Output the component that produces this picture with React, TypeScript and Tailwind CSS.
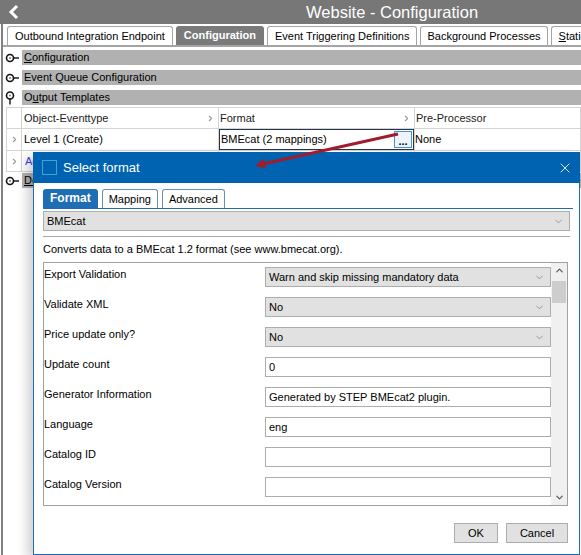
import { ChevronDown, ChevronRight, ChevronUp, X } from 'lucide-react';

const font = { fontFamily: '"Liberation Sans", Arial, sans-serif' };

function CollapsedIcon() {
  return (
    <svg width="15" height="12" viewBox="0 0 15 12" className="shrink-0">
      <circle cx="5" cy="6" r="3.5" fill="#fff" stroke="#111" strokeWidth="1.6" />
      <circle cx="5" cy="6" r="1" fill="#777" />
      <line x1="8.5" y1="6" x2="14" y2="6" stroke="#111" strokeWidth="1.4" />
    </svg>
  );
}

function ExpandedIcon() {
  return (
    <svg width="15" height="14" viewBox="0 0 15 14" className="shrink-0">
      <circle cx="5" cy="4.5" r="3.5" fill="#fff" stroke="#111" strokeWidth="1.6" />
      <circle cx="5" cy="4.5" r="1" fill="#777" />
      <line x1="5" y1="8" x2="5" y2="13.5" stroke="#111" strokeWidth="1.4" />
    </svg>
  );
}

function Section({ label, expanded }: { label: React.ReactNode; expanded?: boolean }) {
  return (
    <div className="flex items-center h-[15px]">
      <div className="w-[19px] flex justify-start pl-[2px]">
        {expanded ? <ExpandedIcon /> : <CollapsedIcon />}
      </div>
      <div className="flex-1 h-full bg-[#b1b1b1] text-[11px] leading-[15px] pl-[2px] text-black">
        {label}
      </div>
    </div>
  );
}

function Cell({ children, className = '' }: { children?: React.ReactNode; className?: string }) {
  return (
    <div className={`border-r border-b border-[#d4d4d4] flex items-center text-[11px] overflow-hidden whitespace-nowrap ${className}`}>
      {children}
    </div>
  );
}

function Chev() {
  return <ChevronRight className="w-[9px] h-[9px] text-[#9a9a9a] shrink-0" strokeWidth={3} />;
}

function SelectBox({ value, width = 'w-full' }: { value: string; width?: string }) {
  return (
    <div className={`${width} h-[20px] bg-[#e1e1e1] border border-[#adadad] flex items-center justify-between pl-[3px] pr-[5px] text-[11px]`}>
      <span>{value}</span>
      <ChevronDown className="w-[11px] h-[11px] text-[#777]" strokeWidth={1.5} />
    </div>
  );
}

function InputBox({ value }: { value?: string }) {
  return (
    <div className="w-full h-[20px] bg-white border border-[#adadad] flex items-center pl-[3px] text-[11px]">
      {value}
    </div>
  );
}

const fields: { label: string; kind: 'select' | 'input'; value: string }[] = [
  { label: 'Export Validation', kind: 'select', value: 'Warn and skip missing mandatory data' },
  { label: 'Validate XML', kind: 'select', value: 'No' },
  { label: 'Price update only?', kind: 'select', value: 'No' },
  { label: 'Update count', kind: 'input', value: '0' },
  { label: 'Generator Information', kind: 'input', value: 'Generated by STEP BMEcat2 plugin.' },
  { label: 'Language', kind: 'input', value: 'eng' },
  { label: 'Catalog ID', kind: 'input', value: '' },
  { label: 'Catalog Version', kind: 'input', value: '' },
];

function SelectFormatDialog() {
  return (
    <div className="absolute left-[33px] top-[152px] w-[547px] h-[403px] bg-white border border-t-0 border-[#1f6db2] shadow-[-6px_4px_10px_rgba(0,0,0,0.18)] flex flex-col">
      <div className="h-[31px] bg-[#0063b1] flex items-center pl-[9px] pr-[7px] text-white shrink-0 -mx-px">
        <div className="w-[15px] h-[15px] border border-[#3aa6d6]" />
        <span className="ml-[6px] text-[13px]">Select format</span>
        <X className="ml-auto w-[16px] h-[16px]" strokeWidth={1.3} />
      </div>
      <div className="flex-1 flex flex-col pl-[9px] pr-[6px]">
        <div className="mt-[6px] flex items-end gap-[4px] border-b border-[#1f6db2] h-[20px]">
          <div className="h-[19px] px-[7px] bg-[#1f6db2] text-white font-bold text-[12px] leading-[19px] rounded-t-[3px]">
            Format
          </div>
          <div className="h-[19px] px-[6px] border border-b-0 border-[#6b8fb8] text-[11px] leading-[18px] rounded-t-[3px]">
            Mapping
          </div>
          <div className="h-[19px] px-[6px] border border-b-0 border-[#6b8fb8] text-[11px] leading-[18px] rounded-t-[3px]">
            Advanced
          </div>
        </div>
        <div className="mt-[2px]">
          <SelectBox value="BMEcat" width="w-[527px]" />
        </div>
        <div className="mt-[5px] w-[527px] border-t border-[#a8a8a8]" />
        <div className="mt-[5px] text-[11px] leading-[14px]">
          Converts data to a BMEcat 1.2 format (see www.bmecat.org).
        </div>
        <div className="mt-[6px] w-[525px] h-[244px] border border-[#a0a0a0] flex">
          <div className="flex-1 flex flex-col pt-[4px]">
            {fields.map((f) => (
              <div key={f.label} className="flex items-start h-[30px] shrink-0">
                <div className="w-[221px] text-[11px] leading-[14px]">{f.label}</div>
                <div className="w-[286px]">
                  {f.kind === 'select' ? <SelectBox value={f.value} /> : <InputBox value={f.value} />}
                </div>
              </div>
            ))}
          </div>
          <div className="w-[17px] bg-[#f0f0f0] flex flex-col items-center py-[2px]">
            <ChevronUp className="w-[11px] h-[11px] text-[#555]" strokeWidth={2.5} />
            <div className="mt-[5px] w-[14px] h-[22px] bg-[#cdcdcd]" />
            <ChevronDown className="mt-auto w-[11px] h-[11px] text-[#555]" strokeWidth={2.5} />
          </div>
        </div>
        <div className="mt-[17px] flex justify-end gap-[8px] w-[525px]">
          <div className="w-[44px] h-[20px] bg-[#e1e1e1] border border-[#adadad] flex items-center justify-center text-[11px]">
            OK
          </div>
          <div className="w-[62px] h-[20px] bg-[#e1e1e1] border border-[#adadad] flex items-center justify-center text-[11px]">
            Cancel
          </div>
        </div>
      </div>
    </div>
  );
}

export default function App() {
  return (
    <div className="relative w-[581px] h-[555px] overflow-hidden bg-white text-black" style={font}>
      <div className="h-[24px] bg-[#777777] flex items-center">
        <svg width="24" height="24" viewBox="0 0 24 24" className="ml-[3px]">
          <polyline points="14,6 8,12 14,18" fill="none" stroke="#fff" strokeWidth="3" />
        </svg>
        <span className="ml-[279px] text-white text-[16.5px] leading-none">
          Website - Configuration
        </span>
      </div>
      <div className="ml-px border-l-2 border-[#808080] h-[531px]">
        <div className="h-[23px] flex items-end gap-[3px] pl-[4px] border-b-2 border-[#a5a5a5] whitespace-nowrap overflow-hidden">
          <div className="h-[19px] px-[7px] border border-b-0 border-[#a5a5a5] rounded-t-[3px] text-[11px] leading-[18px]">
            Outbound Integration Endpoint
          </div>
          <div className="h-[19px] px-[8px] bg-[#7a7a7a] rounded-t-[3px] text-white font-bold text-[11px] leading-[18px]">
            Configuration
          </div>
          <div className="h-[19px] px-[7px] border border-b-0 border-[#a5a5a5] rounded-t-[3px] text-[11px] leading-[18px]">
            Event Triggering Definitions
          </div>
          <div className="h-[19px] px-[6px] border border-b-0 border-[#a5a5a5] rounded-t-[3px] text-[11px] leading-[18px]">
            Background Processes
          </div>
          <div className="h-[19px] w-[40px] shrink-0 overflow-hidden pl-[7px] border border-b-0 border-r-0 border-[#a5a5a5] rounded-tl-[3px] text-[11px] leading-[18px]">
            <span className="underline">S</span>tatis
          </div>
        </div>
        <div className="mt-[3px] flex flex-col gap-[5px]">
          <Section label={<><span className="underline">C</span>onfiguration</>} />
          <Section label="Event Queue Configuration" />
          <Section expanded label={<>O<span className="underline">u</span>tput Templates</>} />
        </div>
        <div className="mt-[2px] ml-[3px] grid grid-cols-[15px_197px_196px_1fr] border-t border-l border-[#d4d4d4]">
          <Cell className="h-[21px]" />
          <Cell className="h-[21px] justify-between pl-[2px] pr-[3px] text-[#222]">
            <span>Object-Eventtype</span>
            <Chev />
          </Cell>
          <Cell className="h-[21px] justify-between pl-[1px] pr-[3px] text-[#222]">
            <span>Format</span>
            <Chev />
          </Cell>
          <Cell className="h-[21px] pl-[1px] text-[#222]">Pre-Processor</Cell>
          <Cell className="h-[22px] justify-center">
            <Chev />
          </Cell>
          <Cell className="h-[22px] pl-[2px]">Level 1 (Create)</Cell>
          <Cell className="h-[22px] p-0">
            <div className="w-full h-[21px] border border-[#26364a] flex items-center justify-between pl-[1px]">
              <span>BMEcat (2 mappings)</span>
              <div className="w-[18px] h-[17px] border border-[#4a8fd6] bg-[#eef4fb] flex items-end justify-center text-[11px] font-bold leading-[12px] mr-px">
                ...
              </div>
            </div>
          </Cell>
          <Cell className="h-[22px]">None</Cell>
          <Cell className="h-[21px] justify-center">
            <Chev />
          </Cell>
          <Cell className="h-[21px] pl-[3px] text-[#3b3bf5]">
            <span className="w-[10px] overflow-hidden">Add</span>
          </Cell>
          <Cell className="h-[21px]" />
          <Cell className="h-[21px]" />
        </div>
        <div className="mt-[1px]">
          <Section label={<span className="underline">De</span>} />
        </div>
      </div>

      <SelectFormatDialog />

      <svg className="absolute left-0 top-0 pointer-events-none" width="581" height="555">
        <line x1="398" y1="134" x2="264" y2="163.8" stroke="#a11d2b" strokeWidth="3" />
        <polygon points="255,166 266,168.2 263.6,158.6" fill="#a11d2b" />
      </svg>
    </div>
  );
}
